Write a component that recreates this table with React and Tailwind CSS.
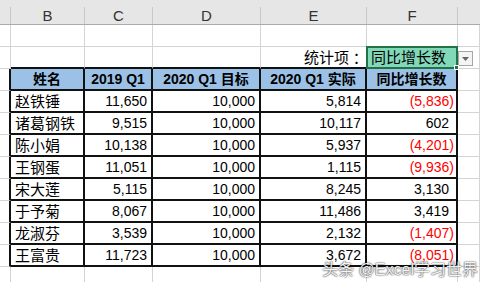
import React from 'react';

const COLS = ['', 'B', 'C', 'D', 'E', 'F', ''];

const rows = [
  ['赵铁锤', '11,650', '10,000', '5,814', '(5,836)'],
  ['诸葛钢铁', '9,515', '10,000', '10,117', '602'],
  ['陈小娟', '10,138', '10,000', '5,937', '(4,201)'],
  ['王钢蛋', '11,051', '10,000', '1,115', '(9,936)'],
  ['宋大莲', '5,115', '10,000', '8,245', '3,130'],
  ['于予菊', '8,067', '10,000', '11,486', '3,419'],
  ['龙淑芬', '3,539', '10,000', '2,132', '(1,407)'],
  ['王富贵', '11,723', '10,000', '3,672', '(8,051)'],
];

const headers = ['姓名', '2019 Q1', '2020 Q1 目标', '2020 Q1 实际', '同比增长数'];

const font = "font-['Liberation_Sans','Noto_Sans_CJK_SC',sans-serif]";

// a plain grey gridline cell
function Blank({ className = '' }) {
  return <div className={`h-[22px] border-r border-b border-[#d4d4d4] ${className}`} />;
}

function ColumnHeader() {
  return (
    <>
      {COLS.map((c, i) => (
        <div key={i} className="h-[25px] bg-[#e6e6e6] border-b border-[#ababab] flex">
          <div className={`flex-1 mt-[7px] flex items-center justify-center text-[15px] text-[#333] leading-none ${i < 6 ? 'border-r border-[#c8c8c8]' : ''}`}>
            {c}
          </div>
        </div>
      ))}
    </>
  );
}

function TableRow({ row }) {
  const [name, ...nums] = row;
  return (
    <>
      <Blank className="!border-r-2 !border-r-[#111]" />
      <div className="h-[22px] border-r-2 border-b-2 border-[#111] flex items-center pl-[4px] text-[15px] leading-none">
        {name}
      </div>
      {nums.map((n, j) => {
        const neg = n.startsWith('(');
        const last = j === 3;
        return (
          <div
            key={j}
            className={`h-[22px] border-r-2 border-b-2 border-[#111] flex items-center justify-end text-[14px] leading-none ${
              last ? (neg ? 'pr-[2px] text-[#ff0000]' : 'pr-[7px]') : 'pr-[4px]'
            }`}
          >
            {n}
          </div>
        );
      })}
      <Blank />
    </>
  );
}

export default function App() {
  return (
    <div className={`relative w-[480px] h-[282px] overflow-hidden bg-white text-black ${font}`}>
      <div className="grid grid-cols-[11px_74px_68px_108px_106px_91px_22px]">
        <ColumnHeader />

        {/* row 1 */}
        {COLS.map((_, i) => (
          <Blank key={`r1-${i}`} />
        ))}

        {/* row 2: filter selector */}
        <Blank />
        <Blank className="!border-b-2 !border-b-[#111]" />
        <Blank className="!border-b-2 !border-b-[#111]" />
        <Blank className="!border-b-2 !border-b-[#111]" />
        <div className="h-[22px] border-r border-b-2 border-[#d4d4d4] !border-b-[#111] flex items-center justify-end pr-[2px] text-[15px] leading-none">
          统计项<span className="font-['Noto_Sans_CJK_TC',sans-serif]">：</span>
        </div>
        <div className="relative h-[22px] border-r border-b-2 border-[#d4d4d4] !border-b-[#111]">
          <div className="absolute -left-px -top-px w-[92px] h-[23px] bg-[#82d9b9] border-2 border-[#217346] flex items-center pl-[3px] text-[15px] leading-none">
            同比增长数
          </div>
          <div className="absolute -right-[2px] -bottom-[3px] w-[5px] h-[5px] bg-[#217346] border border-white" />
        </div>
        <div className="h-[22px] border-r border-b border-[#d4d4d4] pt-[4px]">
          <div className="w-[15px] h-[15px] bg-[#f4f4f4] border border-[#a6a6a6] flex items-center justify-center">
            <svg width="7" height="4" viewBox="0 0 7 4">
              <path d="M0 0h7L3.5 4z" fill="#666" />
            </svg>
          </div>
        </div>

        {/* table header */}
        <Blank className="!border-r-2 !border-r-[#111]" />
        {headers.map((h) => (
          <div
            key={h}
            className="h-[22px] bg-[#9bc2e6] border-r-2 border-b-2 border-[#111] flex items-center justify-center font-bold text-[14px] leading-none"
          >
            {h}
          </div>
        ))}
        <Blank />

        {rows.map((r) => (
          <TableRow key={r[0]} row={r} />
        ))}

        {/* row after table */}
        {COLS.map((_, i) => (
          <Blank key={`r12-${i}`} />
        ))}
      </div>

      <div className="absolute right-[2px] bottom-[4px] text-[16px] leading-none text-white/95 [text-shadow:0_0_2px_rgba(0,0,0,0.75),0_0_1px_rgba(0,0,0,0.6)]">
        头条 @Excel学习世界
      </div>
    </div>
  );
}
